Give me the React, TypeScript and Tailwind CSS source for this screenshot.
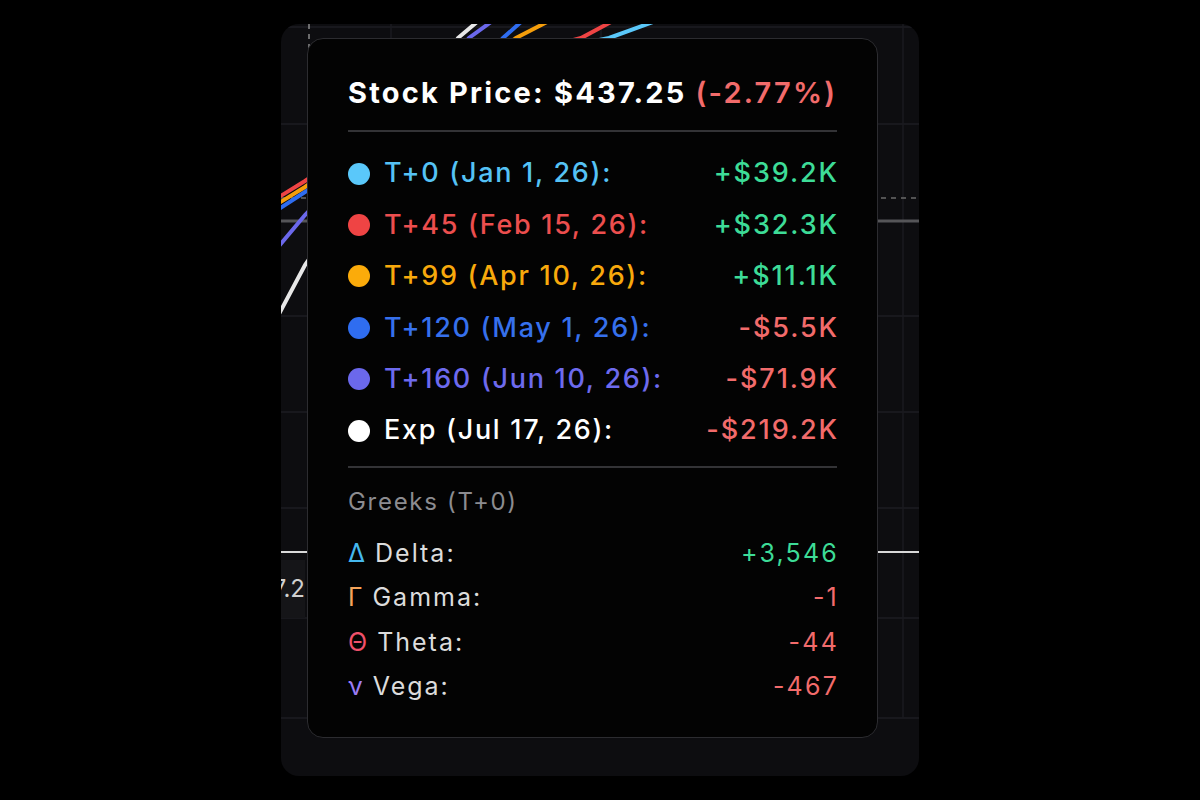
import React from "react";

const rows = [
  { dot: "#5ac8fa", text: "#55c2f5", label: "T+0 (Jan 1, 26):", value: "+$39.2K", pos: true },
  { dot: "#ef4444", text: "#ec4e4e", label: "T+45 (Feb 15, 26):", value: "+$32.3K", pos: true },
  { dot: "#fbab0a", text: "#f8a90c", label: "T+99 (Apr 10, 26):", value: "+$11.1K", pos: true },
  { dot: "#2f6df0", text: "#3670ec", label: "T+120 (May 1, 26):", value: "-$5.5K", pos: false },
  { dot: "#6b68ec", text: "#6d6aee", label: "T+160 (Jun 10, 26):", value: "-$71.9K", pos: false },
  { dot: "#ffffff", text: "#ffffff", label: "Exp (Jul 17, 26):", value: "-$219.2K", pos: false },
];

const greeks = [
  { sym: "Δ", color: "#45b8ee", label: "Delta:", value: "+3,546", pos: true },
  { sym: "Γ", color: "#f5a45a", label: "Gamma:", value: "-1", pos: false },
  { sym: "Θ", color: "#f0506a", label: "Theta:", value: "-44", pos: false },
  { sym: "ν", color: "#9b7cf5", label: "Vega:", value: "-467", pos: false },
];

function Chart() {
  const lines = [
    { c: "#ef4444", d: "M -2 173 L 24 157 L 200 40 L 300 14 L 330 -2" },
    { c: "#f59e0b", d: "M -2 179 L 24 163 L 200 40 L 235 14 L 266 -2" },
    { c: "#2f6df0", d: "M -2 185 L 24 168 L 200 40 L 222 14 L 240 -2" },
    { c: "#6b68ec", d: "M -2 222 L 24 191 L 150 60 L 188 14 L 210 -2" },
    { c: "#e8e8e8", d: "M -2 290 L 24 241 L 150 60 L 177 14 L 196 -2" },
    { c: "#5ac8fa", d: "M 30 150 L 200 40 L 328 14 L 372 -2" },
  ];
  return (
    <svg className="absolute inset-0" width="638" height="752" viewBox="0 0 638 752">
      {[3, 100, 292, 388, 484, 594, 694].map((y) => (
        <line key={y} x1="0" x2="638" y1={y} y2={y} stroke="#1d1d22" strokeWidth="1.5" />
      ))}
      {[110, 320, 622].map((x) => (
        <line key={x} x1={x} x2={x} y1="0" y2="694" stroke="#1a1a1f" strokeWidth="1.5" />
      ))}
      <line x1="28" x2="28" y1="0" y2="694" stroke="#8a8a8a" strokeWidth="1.5" strokeDasharray="5 5" />
      <line x1="0" x2="638" y1="174" y2="174" stroke="#6a6a6a" strokeWidth="1.5" strokeDasharray="5 5" />
      <line x1="0" x2="638" y1="197" y2="197" stroke="#555558" strokeWidth="3" />
      <line x1="0" x2="638" y1="528" y2="528" stroke="#d8d8d8" strokeWidth="2" />
      {lines.map((l, i) => (
        <path key={i} d={l.d} stroke={l.c} strokeWidth="4" fill="none" strokeLinecap="round" />
      ))}
    </svg>
  );
}

export default function App() {
  return (
    <div
      className="flex h-screen w-full items-center justify-center bg-black"
      style={{ fontFamily: "Inter, 'Noto Sans', sans-serif" }}
    >
      <div className="relative h-[752px] w-[638px] overflow-hidden rounded-[18px] bg-[#0d0d10]">
        <Chart />
        <div className="absolute left-0 top-[536px] flex h-[58px] w-[24px] items-center justify-end overflow-hidden bg-[#151518]">
          <span className="whitespace-nowrap text-[24px] text-[#d0d0d0]">437.2</span>
        </div>
        <div className="absolute left-[26px] top-[14px] flex h-[700px] w-[571px] flex-col rounded-[16px] border-[1.5px] border-[#2c2c30] bg-[#030303] pl-[40px] pr-[38px] pt-[34px]">
          <div className="whitespace-nowrap text-[29px] font-bold leading-[40px] tracking-[2.2px] text-white">
            Stock Price: $437.25 <span className="font-semibold text-[#f26b6b]">(-2.77%)</span>
          </div>
          <div className="mr-[2px] mt-[17px] h-[2px] bg-[#333336]" />
          <div className="mt-[16px] flex flex-col">
            {rows.map((r) => (
              <div key={r.label} className="flex h-[51.4px] items-center justify-between">
                <div className="flex items-center gap-[14px]">
                  <span className="h-[22px] w-[22px] shrink-0 rounded-full" style={{ background: r.dot }} />
                  <span
                    className="whitespace-nowrap text-[27px] font-medium tracking-[1.7px]"
                    style={{ color: r.text }}
                  >
                    {r.label}
                  </span>
                </div>
                <span
                  className={`whitespace-nowrap text-[27px] font-medium tracking-[1.9px] ${r.pos ? "text-[#3ddc97]" : "text-[#f26b6b]"}`}
                >
                  {r.value}
                </span>
              </div>
            ))}
          </div>
          <div className="mr-[2px] mt-[10px] h-[2px] bg-[#333336]" />
          <div className="mt-[18px] text-[24px] leading-[32px] tracking-[1.7px] text-[#8c8c90]">
            Greeks (T+0)
          </div>
          <div className="mt-[13px] flex flex-col">
            {greeks.map((g) => (
              <div key={g.label} className="flex h-[44.5px] items-center justify-between">
                <div className="flex items-center gap-[8px] text-[25px] tracking-[2px]">
                  <span style={{ color: g.color }}>{g.sym}</span>
                  <span className="text-[#dcdcdc]">{g.label}</span>
                </div>
                <span
                  className={`text-[25px] tracking-[2.2px] ${g.pos ? "text-[#3ddc97]" : "text-[#f26b6b]"}`}
                >
                  {g.value}
                </span>
              </div>
            ))}
          </div>
        </div>
      </div>
    </div>
  );
}
